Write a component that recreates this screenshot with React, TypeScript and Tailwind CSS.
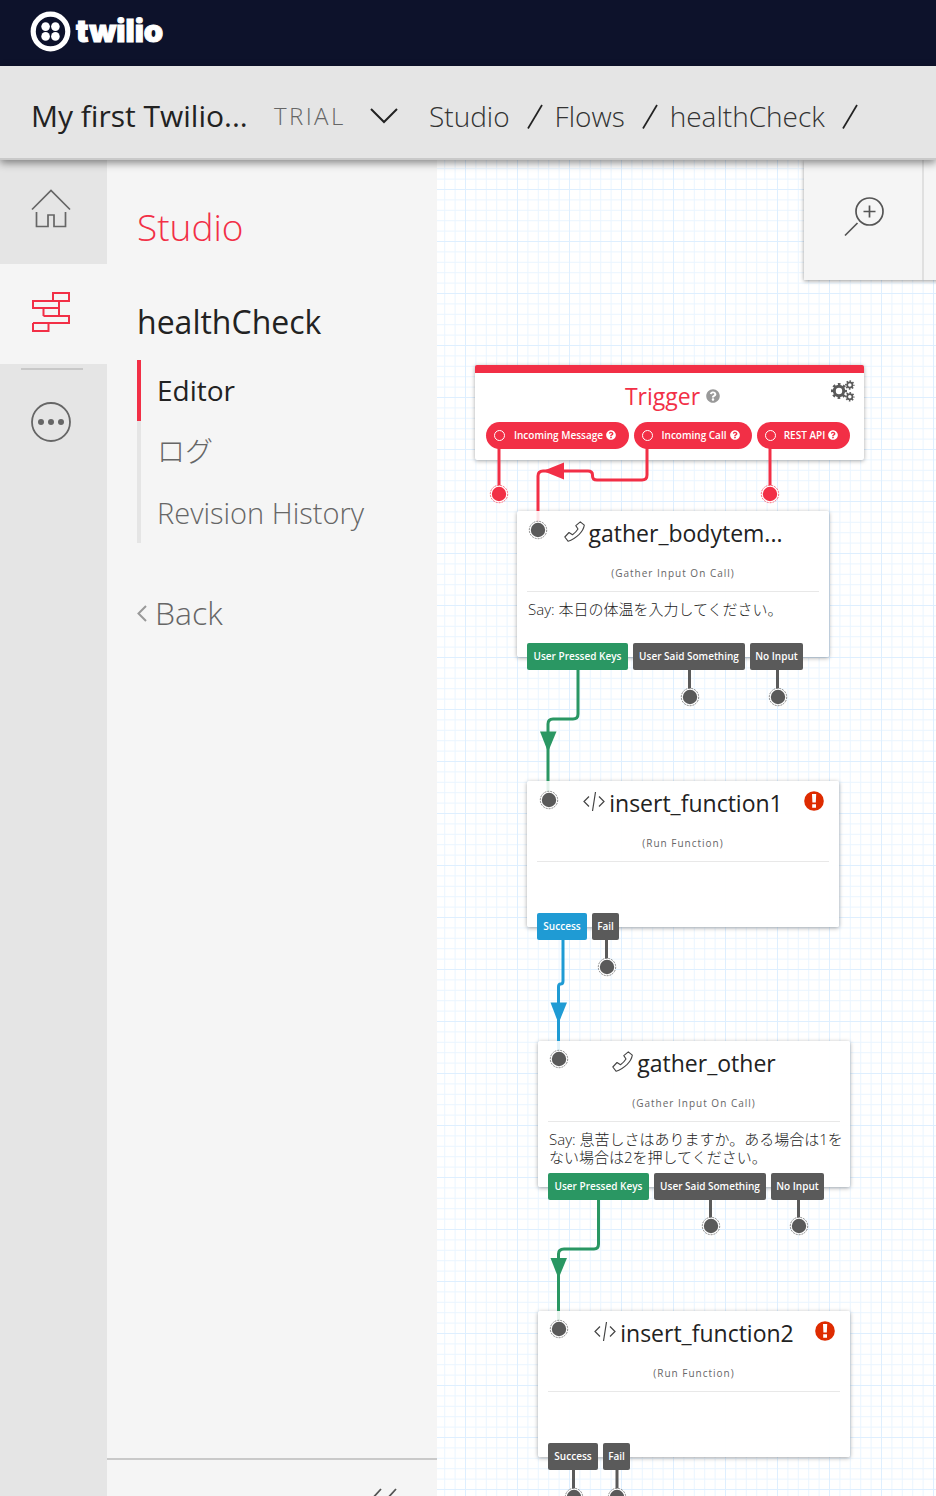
import type { ReactNode } from "react";
import { FaQuestionCircle } from "react-icons/fa";

const RED = "#f22f46";
const GREEN = "#2a9763";
const BLUE = "#1f9bd4";
const GRAY = "#5a5a5a";

function Logo() {
  return (
    <a href="#home" className="flex items-center gap-[5px] text-white" aria-label="twilio">
      <svg width="41" height="41" viewBox="0 0 41 41" fill="currentColor" aria-hidden="true">
        <circle cx="20.500" cy="20.500" r="17.300" fill="none" stroke="currentColor" strokeWidth="5.200" />
        <circle cx="15.600" cy="15.600" r="4.300" />
        <circle cx="25.400" cy="15.600" r="4.300" />
        <circle cx="15.600" cy="25.400" r="4.300" />
        <circle cx="25.400" cy="25.400" r="4.300" />
      </svg>
      <span className="font-[Inter,sans-serif] text-[31px] leading-10 font-black [-webkit-text-stroke:1px_white]">
        twilio
      </span>
    </a>
  );
}

function Slash() {
  return (
    <svg className="mr-3 ml-[17px]" width="16" height="25" viewBox="0 0 16 25" fill="none" stroke="#222" strokeWidth="1.700" aria-hidden="true">
      <path d="M1 24.500L15 1" />
    </svg>
  );
}

function AccountBar() {
  return (
    <div className="relative z-20 flex h-[94px] shrink-0 items-center border-b-2 border-[#c9c9c9] bg-[#e5e5e5] pt-2 pl-[31px] whitespace-nowrap shadow-[0_3px_8px_rgba(0,0,0,0.45)]">
      <button type="button" className="flex items-center">
        <span className="w-[243px] text-left text-[30px] leading-10 text-[#222]">My first Twilio...</span>
        <span className="w-24 text-left text-2xl font-light tracking-widest text-[#666]">TRIAL</span>
        <svg width="28" height="16" viewBox="0 0 28 16" fill="none" stroke="#222" strokeWidth="2" aria-hidden="true">
          <path d="M1 1l13 13L27 1" />
        </svg>
      </button>
      <nav aria-label="Breadcrumb" className="flex items-center pl-[31px] text-[28px] font-light text-[#333]">
        <a href="#studio">Studio</a>
        <Slash />
        <a href="#flows">Flows</a>
        <Slash />
        <a href="#flow">healthCheck</a>
        <Slash />
      </nav>
    </div>
  );
}

function Rail() {
  return (
    <nav aria-label="Products" className="flex w-[107px] shrink-0 flex-col bg-[#e5e5e5]">
      <a href="#dashboard" aria-label="Home" className="flex h-[104px] pt-7 pl-[31px]">
        <svg width="40" height="42" viewBox="0 0 40 42" fill="none" stroke="#666" strokeWidth="1.700" aria-hidden="true">
          <path d="M1 21.500L20 2.500L39 21.500" />
          <path d="M5.500 24v14.500H17V27h6v11.500h11.500V24" />
        </svg>
      </a>
      <a href="#studio" aria-label="Studio" className="flex h-[100px] bg-[#f5f5f5] pt-7 pl-[31px]">
        <svg width="40" height="42" viewBox="0 0 40 42" fill="none" stroke={RED} strokeWidth="2" aria-hidden="true">
          <path d="M22 9V1h16v8H22" />
          <rect x="2" y="9" width="26" height="7" />
          <path d="M12.500 16v8M28 16v8" />
          <path d="M12.500 24H38v7H2" />
          <path d="M2 31v8h15.500v-8" />
        </svg>
      </a>
      <div className="mt-1 ml-[21px] h-0.5 w-[62px] bg-[#c8c8c8]" />
      <button type="button" aria-label="All products" className="mt-8 ml-[31px] w-10">
        <svg width="40" height="40" viewBox="0 0 40 40" aria-hidden="true">
          <circle cx="20" cy="20" r="19" fill="none" stroke="#666" strokeWidth="1.800" />
          <circle cx="10" cy="20" r="3" fill="#666" />
          <circle cx="20" cy="20" r="3" fill="#666" />
          <circle cx="30" cy="20" r="3" fill="#666" />
        </svg>
      </button>
    </nav>
  );
}

function Sidebar() {
  return (
    <aside className="flex w-[330px] shrink-0 flex-col bg-[#f5f5f5]">
      <div className="flex-1 pt-10 pl-[30px]">
        <h1 className="text-[37px] leading-[54px] font-light text-[#f22f46]">Studio</h1>
        <h2 className="mt-11 text-[32px] leading-[48px] text-[#222]">healthCheck</h2>
        <ul className="mt-3.5 text-[28px] leading-[61px] text-[#666]">
          <li className="border-l-4 border-[#f22f46] pl-4 text-[#222]">
            <a href="#editor">Editor</a>
          </li>
          <li className="border-l-4 border-[#e5e5e5] pl-4 font-light">
            <a href="#logs">ログ</a>
          </li>
          <li className="border-l-4 border-[#e5e5e5] pl-4 text-[29px] font-light">
            <a href="#revisions">Revision History</a>
          </li>
        </ul>
        <a href="#back" className="mt-[46px] flex items-center gap-2 text-[32px] leading-[48px] font-light text-[#666]">
          <svg width="10" height="17" viewBox="0 0 10 17" fill="none" stroke="#999" strokeWidth="2" aria-hidden="true">
            <path d="M9 1L1.500 8.500L9 16" />
          </svg>
          Back
        </a>
      </div>
      <div className="flex h-[38px] justify-end overflow-hidden border-t-2 border-[#c9c9c9] pt-7 pr-10">
        <button type="button" aria-label="Collapse menu" className="h-7">
          <svg width="26" height="28" viewBox="0 0 26 28" fill="none" stroke="#555" strokeWidth="1.800" aria-hidden="true">
            <path d="M10 1L0 12l9 12M25 1L15 12l9 12" />
          </svg>
        </button>
      </div>
    </aside>
  );
}

function Grid() {
  return (
    <svg className="absolute inset-0 h-full w-full" aria-hidden="true">
      <defs>
        <pattern id="grid" x="28" y="29" width="52" height="52" patternUnits="userSpaceOnUse">
          <path
            d="M10.900 0V52M21.300 0V52M31.700 0V52M42.100 0V52M0 10.900H52M0 21.300H52M0 31.700H52M0 42.100H52"
            stroke="#eaf5ff"
          />
          <path d="M0.500 0V52M0 0.500H52" stroke="#deefff" />
        </pattern>
      </defs>
      <rect width="100%" height="100%" fill="#fff" />
      <rect width="100%" height="100%" fill="url(#grid)" />
    </svg>
  );
}

type Point = { x: number; y: number; color: string };

const endpoints: Point[] = [
  { x: 62, y: 334, color: RED },
  { x: 333, y: 334, color: RED },
  { x: 101, y: 370, color: GRAY },
  { x: 253, y: 537, color: GRAY },
  { x: 341, y: 537, color: GRAY },
  { x: 112, y: 640, color: GRAY },
  { x: 170, y: 807, color: GRAY },
  { x: 122, y: 899, color: GRAY },
  { x: 274, y: 1066, color: GRAY },
  { x: 362, y: 1066, color: GRAY },
  { x: 122, y: 1169, color: GRAY },
  { x: 137, y: 1337, color: GRAY },
  { x: 180, y: 1337, color: GRAY },
];

const edges = [
  { d: "M62 288V328", color: RED },
  { d: "M333 288V328", color: RED },
  { d: "M210 288V315Q210 320 205 320H160Q155.500 320 155.500 316V315Q155.500 311 151 311H106Q101 311 101 316V351", color: RED },
  { d: "M141 510V554Q141 559 136 559H116Q111 559 111 564V621", color: GREEN },
  { d: "M252.500 510V532M340.500 510V532M169.500 780V802M273.500 1040V1062M361.500 1040V1062M136.500 1310V1332M180 1310V1332", color: GRAY },
  { d: "M126 780V821Q126 824 123.500 824Q121.500 824 121.500 827V881", color: BLUE },
  { d: "M161.500 1040V1084Q161.500 1089 157 1089H127Q121.500 1089 121.500 1094V1151", color: GREEN },
];

const arrows = [
  { d: "M106 311L127 302.500V319.500Z", color: RED },
  { d: "M103 571.500H119.500L111 592Z", color: GREEN },
  { d: "M113.500 842.500H130L121.500 863.500Z", color: BLUE },
  { d: "M113.500 1098H130L121.500 1118.500Z", color: GREEN },
];

const fades = [
  { d: "M101 351V362", color: RED },
  { d: "M111 621V632", color: GREEN },
  { d: "M121.500 881V891", color: BLUE },
  { d: "M121.500 1151V1161", color: GREEN },
];

function Connections() {
  return (
    <svg className="pointer-events-none absolute inset-0 h-full w-full" fill="none" aria-hidden="true">
      {fades.map((f) => (
        <path key={f.d} d={f.d} stroke={f.color} strokeWidth="3" opacity="0.12" />
      ))}
      {edges.map((e) => (
        <path key={e.d} d={e.d} stroke={e.color} strokeWidth="3" />
      ))}
      {arrows.map((a) => (
        <path key={a.d} d={a.d} fill={a.color} />
      ))}
      {endpoints.map((p) => (
        <g key={`${p.x}-${p.y}`}>
          <circle cx={p.x} cy={p.y} r="8.700" fill="#fff" stroke={p.color} strokeWidth="0.700" strokeDasharray="2 1" />
          <circle cx={p.x} cy={p.y} r="7.200" fill={p.color} />
        </g>
      ))}
    </svg>
  );
}

const cardShadow = "shadow-[0_1px_4px_rgba(0,0,0,0.35)]";

function GearsIcon() {
  return (
    <svg width="24" height="22" viewBox="0 0 24 22" fill="none" stroke="#5a5a5a" aria-hidden="true">
      <circle cx="8" cy="11" r="4.700" strokeWidth="3" />
      <circle cx="8" cy="11" r="6.800" strokeWidth="2.400" strokeDasharray="2.670 2.670" strokeDashoffset="1.330" />
      <circle cx="18.800" cy="5" r="2.600" strokeWidth="1.700" />
      <circle cx="18.800" cy="5" r="3.900" strokeWidth="1.700" strokeDasharray="1.530 1.530" strokeDashoffset="0.760" />
      <circle cx="18.800" cy="16.800" r="2.600" strokeWidth="1.700" />
      <circle cx="18.800" cy="16.800" r="3.900" strokeWidth="1.700" strokeDasharray="1.530 1.530" strokeDashoffset="0.760" />
    </svg>
  );
}

function WarningIcon() {
  return (
    <svg className="absolute top-2.5 right-[15px]" width="20" height="20" viewBox="0 0 20 20" aria-label="Warning">
      <circle cx="10" cy="10" r="9.800" fill="#de2b00" />
      <path d="M8 3h4.200l-.4 8.600H8.400zM8.200 13.200h3.800v3.500H8.200z" fill="#fff" />
    </svg>
  );
}

function TriggerPill({ className, children }: { className: string; children: ReactNode }) {
  return (
    <button
      type="button"
      className={`flex h-[27px] items-center rounded-full bg-[#f22f46] pr-1 pl-2 text-[10px] font-semibold whitespace-nowrap text-white ${className}`}
    >
      <span className="size-[11px] rounded-full border-[1.5px] border-white" />
      <span className="flex flex-1 items-center justify-center gap-[3px]">
        {children}
        <FaQuestionCircle size={10} className="mb-0.5" />
      </span>
    </button>
  );
}

function TriggerNode() {
  return (
    <section className={`absolute top-[205px] left-[38px] h-[95px] w-[389px] rounded-xs border-t-8 border-[#f22f46] bg-white ${cardShadow}`}>
      <header className="flex h-[49px] items-center justify-center gap-1.5 pb-[3px] pl-1.5">
        <h3 className="text-[23px] text-[#f22f46]">Trigger</h3>
        <FaQuestionCircle size={14} color="#999" />
      </header>
      <button type="button" aria-label="Trigger settings" className="absolute top-[7px] right-[9px]">
        <GearsIcon />
      </button>
      <div className="flex gap-[5px] px-[11px]">
        <TriggerPill className="w-[143px]">Incoming Message</TriggerPill>
        <TriggerPill className="w-[118px]">Incoming Call</TriggerPill>
        <TriggerPill className="w-[93px]">REST API</TriggerPill>
      </div>
    </section>
  );
}

function PhoneIcon() {
  return (
    <svg width="21" height="21" viewBox="0 0 21 21" fill="none" stroke="#444" strokeWidth="1.100" strokeLinejoin="round" aria-hidden="true">
      <path d="M.8 16L5 11.500L8.500 13.800Q11.800 11.400 14 8L11.800 4.600L16.300.8L20.300 4.200Q19.600 9 15.200 13.400Q9.500 18.800 4.200 20.300Z" />
    </svg>
  );
}

function CodeIcon() {
  return (
    <svg width="22" height="21" viewBox="0 0 22 21" fill="none" stroke="#444" strokeWidth="1.200" aria-hidden="true">
      <path d="M6 5.500L1 10.500L6 15.500M16 5.500L21 10.500L16 15.500M12.500 1L9.500 20" />
    </svg>
  );
}

type Output = { label: string; className: string };

type NodeProps = {
  position: string;
  icon: ReactNode;
  title: string;
  kind: string;
  outputs: Output[];
  warning?: boolean;
  children?: ReactNode;
};

function WidgetNode({ position, icon, title, kind, outputs, warning, children }: NodeProps) {
  return (
    <section className={`absolute flex h-[146px] w-[312px] flex-col rounded-xs bg-white/95 px-2.5 ${cardShadow} ${position}`}>
      <header className="flex h-[46px] items-center justify-center gap-1 pb-0.5">
        <span className="pb-1">{icon}</span>
        <h3 className="text-[23px] whitespace-nowrap text-[#222]">{title}</h3>
      </header>
      {warning && <WarningIcon />}
      <p className="h-[35px] border-b border-[#e8e8e8] text-center text-[10px] leading-[33px] tracking-widest text-[#666]">
        ({kind})
      </p>
      <div className="flex-1 pt-2 pl-px text-[15px] leading-[18px] font-light whitespace-nowrap text-[#222]">{children}</div>
      <div className="-mb-[13px] flex gap-[5px]">
        {outputs.map((o) => (
          <button
            key={o.label}
            type="button"
            className={`h-[27px] rounded-xs text-[10px] font-semibold whitespace-nowrap text-white ${o.className}`}
          >
            {o.label}
          </button>
        ))}
      </div>
    </section>
  );
}

const gatherOutputs: Output[] = [
  { label: "User Pressed Keys", className: "w-[101px] bg-[#2a9763]" },
  { label: "User Said Something", className: "w-[112px] bg-[#5a5a5a]" },
  { label: "No Input", className: "w-[53px] bg-[#5a5a5a]" },
];

function Canvas() {
  return (
    <main className="relative min-w-0 flex-1 overflow-hidden">
      <Grid />
      <TriggerNode />
      <WidgetNode
        position="top-[351px] left-20"
        icon={<PhoneIcon />}
        title="gather_bodytem..."
        kind="Gather Input On Call"
        outputs={gatherOutputs}
      >
        Say: 本日の体温を入力してください。
      </WidgetNode>
      <WidgetNode
        position="top-[621px] left-[90px]"
        icon={<CodeIcon />}
        title="insert_function1"
        kind="Run Function"
        warning
        outputs={[
          { label: "Success", className: "w-[50px] bg-[#1f9bd4]" },
          { label: "Fail", className: "w-[27px] bg-[#5a5a5a]" },
        ]}
      />
      <WidgetNode
        position="top-[881px] left-[101px]"
        icon={<PhoneIcon />}
        title="gather_other"
        kind="Gather Input On Call"
        outputs={gatherOutputs}
      >
        Say: 息苦しさはありますか。ある場合は1を
        <br />
        ない場合は2を押してください。
      </WidgetNode>
      <WidgetNode
        position="top-[1151px] left-[101px]"
        icon={<CodeIcon />}
        title="insert_function2"
        kind="Run Function"
        warning
        outputs={[
          { label: "Success", className: "w-[50px] bg-[#5a5a5a]" },
          { label: "Fail", className: "w-[27px] bg-[#5a5a5a]" },
        ]}
      />
      <Connections />
      <div className="absolute top-0 left-[367px] flex h-[120px] bg-[#f5f5f5] shadow-[0_1px_4px_rgba(0,0,0,0.4)]">
        <button type="button" aria-label="Zoom in" className="flex w-[120px] items-center justify-center border-r-2 border-[#e0e0e0] pb-1.5 pl-px">
          <svg width="40" height="40" viewBox="0 0 40 40" fill="none" stroke="#555" strokeWidth="1.700" aria-hidden="true">
            <circle cx="25.500" cy="14.500" r="13.500" />
            <path d="M25.500 8.500v12M19.500 14.500h12M13.500 26L1 38.500" />
          </svg>
        </button>
        <button type="button" aria-label="Zoom out" className="w-[120px]" />
      </div>
    </main>
  );
}

export default function App() {
  return (
    <div className="flex h-screen flex-col overflow-hidden bg-white font-['Open_Sans','Noto_Sans_CJK_JP',sans-serif]">
      <header className="flex h-[66px] shrink-0 items-center bg-[#0d122b] pb-1 pl-[30px]">
        <Logo />
      </header>
      <AccountBar />
      <div className="flex min-h-0 flex-1">
        <Rail />
        <Sidebar />
        <Canvas />
      </div>
    </div>
  );
}
